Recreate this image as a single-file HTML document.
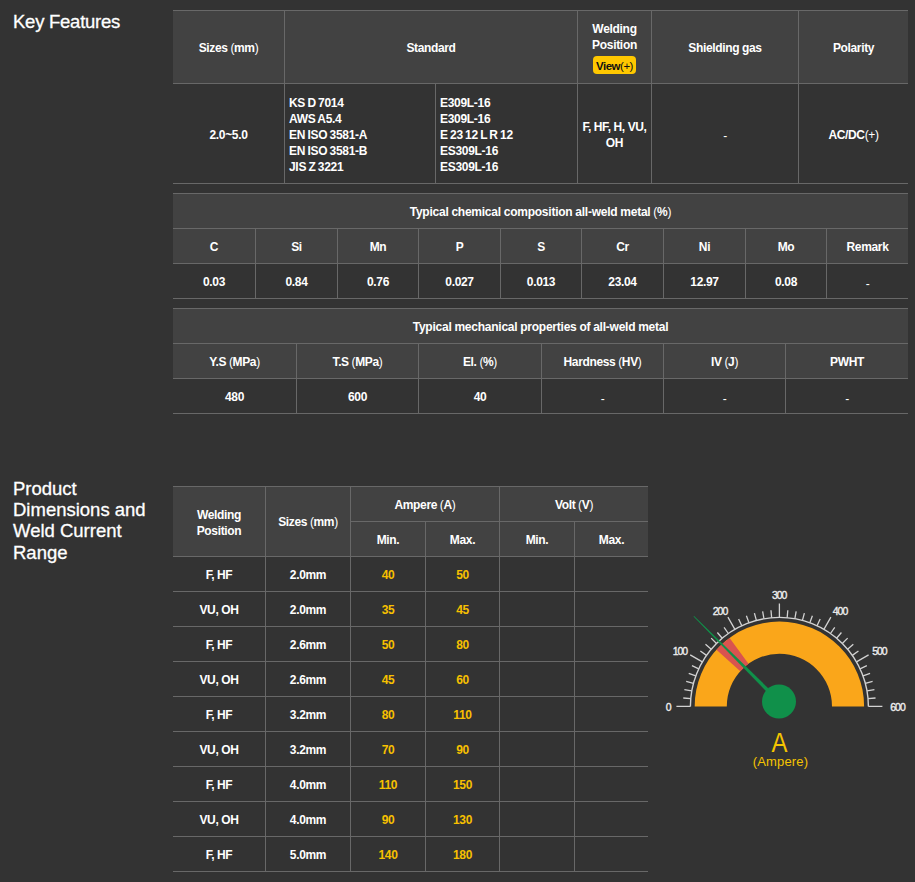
<!DOCTYPE html>
<html><head><meta charset="utf-8">
<style>
html,body{margin:0;padding:0;background:#333333;width:915px;height:882px;overflow:hidden;}
body{position:relative;font-family:"Liberation Sans",sans-serif;}
.r{position:absolute}
.t{position:absolute;display:flex;align-items:center;justify-content:center;text-align:center;color:#ffffff;
font-weight:bold;font-size:12px;letter-spacing:-0.35px;word-spacing:-0.2px;line-height:16px}
.t span{display:block;position:relative;top:1px}
.t.y{color:#f7c000}
.std{position:absolute;color:#ffffff;font-weight:bold;font-size:12px;letter-spacing:-0.3px;word-spacing:-0.7px;line-height:16.2px;white-space:nowrap}
.wp{position:absolute;left:578px;top:11px;width:73px;height:72px;text-align:center;color:#ffffff}
.wpt{position:absolute;left:0;top:10px;width:73px;font-weight:bold;font-size:12px;letter-spacing:-0.3px;line-height:16px}
.btn{position:absolute;left:15px;top:45px;width:43px;height:18px;border-radius:4px;background:#ffc800;color:#111;
font-weight:bold;font-size:11.5px;letter-spacing:-0.5px;line-height:20px;text-align:center}
.btn .pl{font-weight:normal}
h2{position:absolute;margin:0;color:#fff;font-weight:normal;font-size:18.5px;line-height:21.3px;left:13px;-webkit-text-stroke:0.3px #fff}
svg{position:absolute;left:0;top:0}
.pn{font-weight:normal}
.dash{font-weight:normal;position:relative;top:1.5px}
.gl{font-family:"Liberation Sans",sans-serif;font-size:10.5px;fill:#eeeeee;stroke:#eeeeee;stroke-width:0.35px;letter-spacing:-1px}
.ga{font-family:"Liberation Sans",sans-serif;font-size:27.5px;fill:#f5c400}
.gb{font-family:"Liberation Sans",sans-serif;font-size:13px;letter-spacing:0.15px;fill:#f5c400}
</style></head><body>
<h2 style="top:10.5px;letter-spacing:-0.25px">Key Features</h2>
<h2 style="top:477.7px">Product<br>Dimensions and<br>Weld Current<br>Range</h2>
<div class="r" style="left:173px;top:10px;width:735px;height:1px;background:#686868"></div><div class="r" style="left:173px;top:11px;width:735px;height:72px;background:#424242"></div><div class="r" style="left:173px;top:83px;width:735px;height:1px;background:#686868"></div><div class="r" style="left:173px;top:183px;width:735px;height:1px;background:#686868"></div><div class="r" style="left:284px;top:11px;width:1px;height:172px;background:#686868"></div><div class="r" style="left:577px;top:11px;width:1px;height:172px;background:#686868"></div><div class="r" style="left:651px;top:11px;width:1px;height:172px;background:#686868"></div><div class="r" style="left:798px;top:11px;width:1px;height:172px;background:#686868"></div><div class="r" style="left:435px;top:84px;width:1px;height:99px;background:#686868"></div><div class="t" style="left:173px;top:11px;width:111px;height:72px;"><span>Sizes <b class="pn">(</b>mm<b class="pn">)</b></span></div><div class="t" style="left:285px;top:11px;width:292px;height:72px;"><span>Standard</span></div><div class="wp"><div class="wpt">Welding<br>Position</div><div class="btn">View<span class="pl"><b class="pn">(</b><b class="pn">+</b><b class="pn">)</b></span></div></div><div class="t" style="left:652px;top:11px;width:146px;height:72px;"><span>Shielding gas</span></div><div class="t" style="left:799px;top:11px;width:109px;height:72px;"><span>Polarity</span></div><div class="t" style="left:173px;top:84px;width:111px;height:99px;"><span>2.0~5.0</span></div><div class="std" style="left:289px;top:94.5px">KS D 7014<br>AWS A5.4<br>EN ISO 3581-A<br>EN ISO 3581-B<br>JIS Z 3221</div><div class="std" style="left:440px;top:94.5px">E309L-16<br>E309L-16<br>E 23 12 L R 12<br>ES309L-16<br>ES309L-16</div><div class="t t2" style="left:578px;top:84px;width:73px;height:99px;"><span>F, HF, H, VU,<br>OH</span></div><div class="t" style="left:652px;top:84px;width:146px;height:99px;"><span><b class="dash">-</b></span></div><div class="t" style="left:799px;top:84px;width:109px;height:99px;"><span>AC/DC<b class="pn">(</b><b class="pn">+</b><b class="pn">)</b></span></div><div class="r" style="left:173px;top:193px;width:735px;height:1px;background:#686868"></div><div class="r" style="left:173px;top:194px;width:735px;height:69px;background:#424242"></div><div class="r" style="left:173px;top:228px;width:735px;height:1px;background:#686868"></div><div class="r" style="left:173px;top:263px;width:735px;height:1px;background:#686868"></div><div class="r" style="left:173px;top:298px;width:735px;height:1px;background:#686868"></div><div class="r" style="left:255px;top:229px;width:1px;height:69px;background:#686868"></div><div class="r" style="left:337px;top:229px;width:1px;height:69px;background:#686868"></div><div class="r" style="left:418px;top:229px;width:1px;height:69px;background:#686868"></div><div class="r" style="left:500px;top:229px;width:1px;height:69px;background:#686868"></div><div class="r" style="left:581px;top:229px;width:1px;height:69px;background:#686868"></div><div class="r" style="left:663px;top:229px;width:1px;height:69px;background:#686868"></div><div class="r" style="left:745px;top:229px;width:1px;height:69px;background:#686868"></div><div class="r" style="left:826px;top:229px;width:1px;height:69px;background:#686868"></div><div class="t" style="left:173px;top:194px;width:735px;height:34px;letter-spacing:-0.24px"><span>Typical chemical composition all-weld metal <b class="pn">(</b>%<b class="pn">)</b></span></div><div class="t" style="left:173px;top:229px;width:82px;height:34px;"><span>C</span></div><div class="t" style="left:173px;top:264px;width:82px;height:34px;"><span>0.03</span></div><div class="t" style="left:256px;top:229px;width:81px;height:34px;"><span>Si</span></div><div class="t" style="left:256px;top:264px;width:81px;height:34px;"><span>0.84</span></div><div class="t" style="left:338px;top:229px;width:80px;height:34px;"><span>Mn</span></div><div class="t" style="left:338px;top:264px;width:80px;height:34px;"><span>0.76</span></div><div class="t" style="left:419px;top:229px;width:81px;height:34px;"><span>P</span></div><div class="t" style="left:419px;top:264px;width:81px;height:34px;"><span>0.027</span></div><div class="t" style="left:501px;top:229px;width:80px;height:34px;"><span>S</span></div><div class="t" style="left:501px;top:264px;width:80px;height:34px;"><span>0.013</span></div><div class="t" style="left:582px;top:229px;width:81px;height:34px;"><span>Cr</span></div><div class="t" style="left:582px;top:264px;width:81px;height:34px;"><span>23.04</span></div><div class="t" style="left:664px;top:229px;width:81px;height:34px;"><span>Ni</span></div><div class="t" style="left:664px;top:264px;width:81px;height:34px;"><span>12.97</span></div><div class="t" style="left:746px;top:229px;width:80px;height:34px;"><span>Mo</span></div><div class="t" style="left:746px;top:264px;width:80px;height:34px;"><span>0.08</span></div><div class="t" style="left:827px;top:229px;width:81px;height:34px;"><span>Remark</span></div><div class="t" style="left:827px;top:264px;width:81px;height:34px;"><span><b class="dash">-</b></span></div><div class="r" style="left:173px;top:308px;width:735px;height:1px;background:#686868"></div><div class="r" style="left:173px;top:309px;width:735px;height:69px;background:#424242"></div><div class="r" style="left:173px;top:343px;width:735px;height:1px;background:#686868"></div><div class="r" style="left:173px;top:378px;width:735px;height:1px;background:#686868"></div><div class="r" style="left:173px;top:413px;width:735px;height:1px;background:#686868"></div><div class="r" style="left:296px;top:344px;width:1px;height:69px;background:#686868"></div><div class="r" style="left:418px;top:344px;width:1px;height:69px;background:#686868"></div><div class="r" style="left:541px;top:344px;width:1px;height:69px;background:#686868"></div><div class="r" style="left:663px;top:344px;width:1px;height:69px;background:#686868"></div><div class="r" style="left:785px;top:344px;width:1px;height:69px;background:#686868"></div><div class="t" style="left:173px;top:309px;width:735px;height:34px;letter-spacing:-0.24px"><span>Typical mechanical properties of all-weld metal</span></div><div class="t" style="left:173px;top:344px;width:123px;height:34px;"><span>Y.S <b class="pn">(</b>MPa<b class="pn">)</b></span></div><div class="t" style="left:173px;top:379px;width:123px;height:34px;"><span>480</span></div><div class="t" style="left:297px;top:344px;width:121px;height:34px;"><span>T.S <b class="pn">(</b>MPa<b class="pn">)</b></span></div><div class="t" style="left:297px;top:379px;width:121px;height:34px;"><span>600</span></div><div class="t" style="left:419px;top:344px;width:122px;height:34px;"><span>El. <b class="pn">(</b>%<b class="pn">)</b></span></div><div class="t" style="left:419px;top:379px;width:122px;height:34px;"><span>40</span></div><div class="t" style="left:542px;top:344px;width:121px;height:34px;"><span>Hardness <b class="pn">(</b>HV<b class="pn">)</b></span></div><div class="t" style="left:542px;top:379px;width:121px;height:34px;"><span><b class="dash">-</b></span></div><div class="t" style="left:664px;top:344px;width:121px;height:34px;"><span>IV <b class="pn">(</b>J<b class="pn">)</b></span></div><div class="t" style="left:664px;top:379px;width:121px;height:34px;"><span><b class="dash">-</b></span></div><div class="t" style="left:786px;top:344px;width:122px;height:34px;"><span>PWHT</span></div><div class="t" style="left:786px;top:379px;width:122px;height:34px;"><span><b class="dash">-</b></span></div><div class="r" style="left:173px;top:486px;width:475px;height:1px;background:#686868"></div><div class="r" style="left:173px;top:487px;width:475px;height:69px;background:#424242"></div><div class="r" style="left:350px;top:521px;width:298px;height:1px;background:#686868"></div><div class="r" style="left:173px;top:556px;width:475px;height:1px;background:#686868"></div><div class="r" style="left:173px;top:591px;width:475px;height:1px;background:#686868"></div><div class="r" style="left:173px;top:626px;width:475px;height:1px;background:#686868"></div><div class="r" style="left:173px;top:661px;width:475px;height:1px;background:#686868"></div><div class="r" style="left:173px;top:696px;width:475px;height:1px;background:#686868"></div><div class="r" style="left:173px;top:731px;width:475px;height:1px;background:#686868"></div><div class="r" style="left:173px;top:766px;width:475px;height:1px;background:#686868"></div><div class="r" style="left:173px;top:801px;width:475px;height:1px;background:#686868"></div><div class="r" style="left:173px;top:836px;width:475px;height:1px;background:#686868"></div><div class="r" style="left:173px;top:871px;width:475px;height:1px;background:#686868"></div><div class="r" style="left:265px;top:487px;width:1px;height:384px;background:#686868"></div><div class="r" style="left:350px;top:487px;width:1px;height:384px;background:#686868"></div><div class="r" style="left:499px;top:487px;width:1px;height:384px;background:#686868"></div><div class="r" style="left:425px;top:522px;width:1px;height:349px;background:#686868"></div><div class="r" style="left:574px;top:522px;width:1px;height:349px;background:#686868"></div><div class="t t2" style="left:173px;top:487px;width:92px;height:69px;"><span>Welding<br>Position</span></div><div class="t" style="left:266px;top:486px;width:84px;height:69px;"><span>Sizes <b class="pn">(</b>mm<b class="pn">)</b></span></div><div class="t" style="left:351px;top:487px;width:148px;height:34px;"><span>Ampere <b class="pn">(</b>A<b class="pn">)</b></span></div><div class="t" style="left:500px;top:487px;width:148px;height:34px;"><span>Volt <b class="pn">(</b>V<b class="pn">)</b></span></div><div class="t" style="left:351px;top:522px;width:74px;height:34px;"><span>Min.</span></div><div class="t" style="left:426px;top:522px;width:73px;height:34px;"><span>Max.</span></div><div class="t" style="left:500px;top:522px;width:74px;height:34px;"><span>Min.</span></div><div class="t" style="left:575px;top:522px;width:73px;height:34px;"><span>Max.</span></div><div class="t" style="left:173px;top:557px;width:92px;height:34px;"><span>F, HF</span></div><div class="t" style="left:266px;top:557px;width:84px;height:34px;"><span>2.0mm</span></div><div class="t y" style="left:351px;top:557px;width:74px;height:34px;"><span>40</span></div><div class="t y" style="left:426px;top:557px;width:73px;height:34px;"><span>50</span></div><div class="t" style="left:173px;top:592px;width:92px;height:34px;"><span>VU, OH</span></div><div class="t" style="left:266px;top:592px;width:84px;height:34px;"><span>2.0mm</span></div><div class="t y" style="left:351px;top:592px;width:74px;height:34px;"><span>35</span></div><div class="t y" style="left:426px;top:592px;width:73px;height:34px;"><span>45</span></div><div class="t" style="left:173px;top:627px;width:92px;height:34px;"><span>F, HF</span></div><div class="t" style="left:266px;top:627px;width:84px;height:34px;"><span>2.6mm</span></div><div class="t y" style="left:351px;top:627px;width:74px;height:34px;"><span>50</span></div><div class="t y" style="left:426px;top:627px;width:73px;height:34px;"><span>80</span></div><div class="t" style="left:173px;top:662px;width:92px;height:34px;"><span>VU, OH</span></div><div class="t" style="left:266px;top:662px;width:84px;height:34px;"><span>2.6mm</span></div><div class="t y" style="left:351px;top:662px;width:74px;height:34px;"><span>45</span></div><div class="t y" style="left:426px;top:662px;width:73px;height:34px;"><span>60</span></div><div class="t" style="left:173px;top:697px;width:92px;height:34px;"><span>F, HF</span></div><div class="t" style="left:266px;top:697px;width:84px;height:34px;"><span>3.2mm</span></div><div class="t y" style="left:351px;top:697px;width:74px;height:34px;"><span>80</span></div><div class="t y" style="left:426px;top:697px;width:73px;height:34px;"><span>110</span></div><div class="t" style="left:173px;top:732px;width:92px;height:34px;"><span>VU, OH</span></div><div class="t" style="left:266px;top:732px;width:84px;height:34px;"><span>3.2mm</span></div><div class="t y" style="left:351px;top:732px;width:74px;height:34px;"><span>70</span></div><div class="t y" style="left:426px;top:732px;width:73px;height:34px;"><span>90</span></div><div class="t" style="left:173px;top:767px;width:92px;height:34px;"><span>F, HF</span></div><div class="t" style="left:266px;top:767px;width:84px;height:34px;"><span>4.0mm</span></div><div class="t y" style="left:351px;top:767px;width:74px;height:34px;"><span>110</span></div><div class="t y" style="left:426px;top:767px;width:73px;height:34px;"><span>150</span></div><div class="t" style="left:173px;top:802px;width:92px;height:34px;"><span>VU, OH</span></div><div class="t" style="left:266px;top:802px;width:84px;height:34px;"><span>4.0mm</span></div><div class="t y" style="left:351px;top:802px;width:74px;height:34px;"><span>90</span></div><div class="t y" style="left:426px;top:802px;width:73px;height:34px;"><span>130</span></div><div class="t" style="left:173px;top:837px;width:92px;height:34px;"><span>F, HF</span></div><div class="t" style="left:266px;top:837px;width:84px;height:34px;"><span>5.0mm</span></div><div class="t y" style="left:351px;top:837px;width:74px;height:34px;"><span>140</span></div><div class="t y" style="left:426px;top:837px;width:73px;height:34px;"><span>180</span></div>
<svg width="915" height="882" viewBox="0 0 915 882"><path d="M694.70,706.40 A84.7,84.7 0 1 1 864.10,706.40 L832.00,706.40 A52.6,52.6 0 1 0 726.80,706.40 Z" fill="#faa61a"/><path d="M716.46,649.72 A84.7,84.7 0 0 1 729.61,637.88 L748.48,663.85 A52.6,52.6 0 0 0 740.31,671.20 Z" fill="#d9534f"/><path d="M690.40,706.40 A89,89 0 0 1 868.40,706.40" fill="none" stroke="#d2d2d2" stroke-width="1.4"/><path d="M690.40,706.40L676.40,706.40 M690.74,698.64L683.27,697.99 M691.75,690.95L684.37,689.64 M693.43,683.37L686.19,681.42 M695.77,675.96L688.72,673.40 M698.74,668.79L691.94,665.62 M702.32,661.90L690.20,654.90 M706.50,655.35L700.35,651.05 M711.22,649.19L705.48,644.37 M716.47,643.47L711.16,638.16 M722.19,638.22L717.37,632.48 M728.35,633.50L724.05,627.35 M734.90,629.32L727.90,617.20 M741.79,625.74L738.62,618.94 M748.96,622.77L746.40,615.72 M756.37,620.43L754.42,613.19 M763.95,618.75L762.64,611.37 M771.64,617.74L770.99,610.27 M779.40,617.40L779.40,603.40 M787.16,617.74L787.81,610.27 M794.85,618.75L796.16,611.37 M802.43,620.43L804.38,613.19 M809.84,622.77L812.40,615.72 M817.01,625.74L820.18,618.94 M823.90,629.32L830.90,617.20 M830.45,633.50L834.75,627.35 M836.61,638.22L841.43,632.48 M842.33,643.47L847.64,638.16 M847.58,649.19L853.32,644.37 M852.30,655.35L858.45,651.05 M856.48,661.90L868.60,654.90 M860.06,668.79L866.86,665.62 M863.03,675.96L870.08,673.40 M865.37,683.37L872.61,681.42 M867.05,690.95L874.43,689.64 M868.06,698.64L875.53,697.99 M868.40,706.40L882.40,706.40" stroke="#d2d2d2" stroke-width="1.3" fill="none"/><path d="M777.59,702.91 L693.51,616.58 L694.08,616.01 L780.41,700.09 Z" fill="#10904a"/><circle cx="779.0" cy="701.5" r="17" fill="#10904a"/><text x="668.2" y="710.7" text-anchor="middle" class="gl">0</text><text x="679.9" y="655.3" text-anchor="middle" class="gl">100</text><text x="720.0" y="614.7" text-anchor="middle" class="gl">200</text><text x="779.2" y="598.8" text-anchor="middle" class="gl">300</text><text x="840.0" y="614.5" text-anchor="middle" class="gl">400</text><text x="879.4" y="655.0" text-anchor="middle" class="gl">500</text><text x="897.5" y="710.7" text-anchor="middle" class="gl">600</text><text x="779.5" y="751.6" text-anchor="middle" class="ga" transform="translate(779.5 0) scale(0.87 1) translate(-779.5 0)">A</text><text x="780.5" y="765.5" text-anchor="middle" class="gb">(Ampere)</text></svg>
</body></html>
